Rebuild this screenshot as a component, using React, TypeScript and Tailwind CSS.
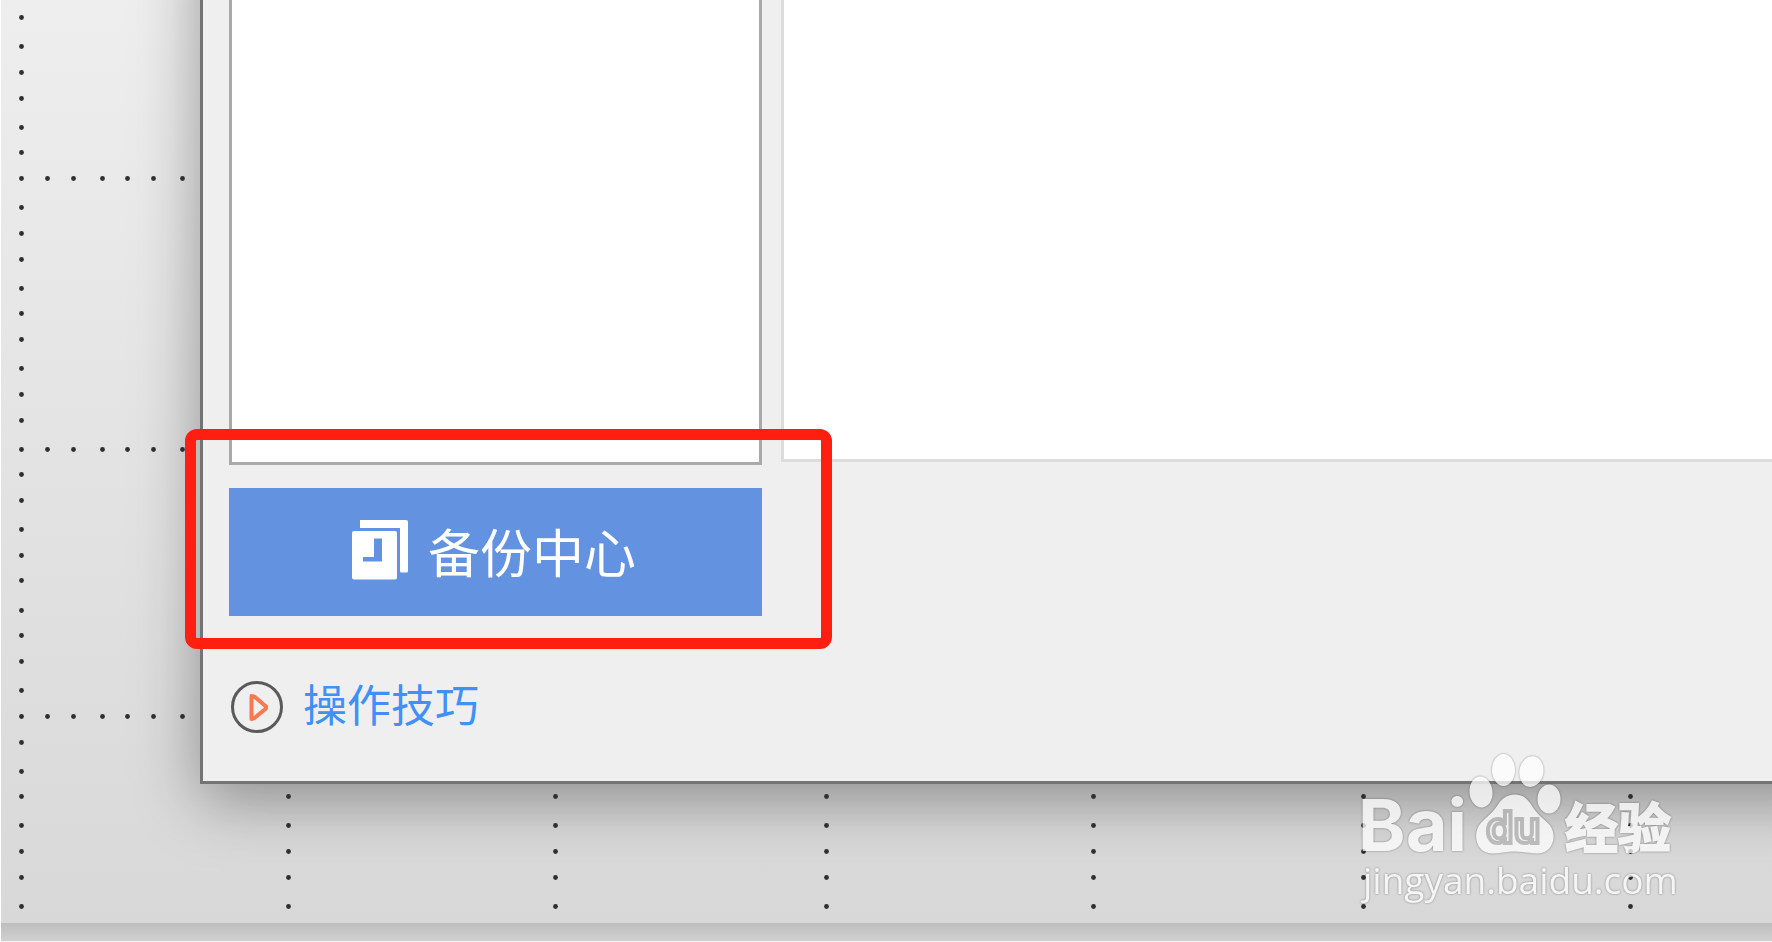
type Dot = { x: number; y: number };

const ROW_YS = [178, 449, 716];
const ROW_XS = [47, 73, 102, 127, 153, 182];
const LEFT_YS = [
  17, 46, 72, 98, 127, 152, 178, 207, 233, 259, 288, 313, 339, 368, 394, 420,
  449, 474, 500, 529, 555, 580, 610, 635, 661, 690, 716, 742, 771, 796, 825, 851,
  877, 906,
];
const COLUMN_XS = [288, 555, 826, 1093, 1363, 1630];
const COLUMN_YS = [796, 825, 851, 877, 906];

const dots: Dot[] = [
  ...LEFT_YS.map((y) => ({ x: 21, y })),
  ...ROW_YS.flatMap((y) => ROW_XS.map((x) => ({ x, y }))),
  ...COLUMN_XS.flatMap((x) => COLUMN_YS.map((y) => ({ x, y }))),
];

function CanvasGrid() {
  return (
    <svg aria-hidden="true" className="absolute inset-0 h-full w-full">
      {dots.map((dot) => (
        <circle key={`${dot.x}-${dot.y}`} cx={dot.x + 0.5} cy={dot.y + 0.5} r="2.4" fill="#2e2e2e" />
      ))}
    </svg>
  );
}

function BackupIcon() {
  return (
    <svg aria-hidden="true" viewBox="0 0 56 60" className="h-[60px] w-[56px] shrink-0">
      <path d="M8 0h46a2 2 0 0 1 2 2v49a1.500 1.500 0 0 1-1.500 1.500h-5a1.500 1.500 0 0 1-1.500-1.500V8H8z" fill="#fff" />
      <rect x="0" y="11" width="45" height="48.500" rx="2" fill="#fff" />
      <path d="M22 18.500h8v23H11v-4.500h11z" fill="#6392e0" />
    </svg>
  );
}

function PlayIcon() {
  return (
    <svg aria-hidden="true" viewBox="0 0 52 52" className="h-[52px] w-[52px] shrink-0">
      <circle cx="26" cy="26" r="24.500" fill="none" stroke="#5a5a5a" strokeWidth="3" />
      <path d="M20.500 15v23l3-1 11.500-9.500v-2L24 16z" fill="none" stroke="#f87850" strokeWidth="4" strokeLinejoin="round" />
    </svg>
  );
}

function Watermark() {
  return (
    <div className="absolute right-[76px] bottom-[12px] opacity-75 [filter:drop-shadow(0_0_1px_rgba(0,0,0,0.5))]">
      <svg viewBox="1340 750 356 180" className="h-[180px] w-[356px]" role="img" aria-label="Baidu">
        <g fill="#fff">
          <ellipse cx="1481" cy="792" rx="11.500" ry="15.500" transform="rotate(-6 1481 792)" />
          <ellipse cx="1503.500" cy="770" rx="11.500" ry="16" />
          <ellipse cx="1531.500" cy="771.500" rx="12" ry="15.500" transform="rotate(10 1531 771)" />
          <ellipse cx="1549" cy="799" rx="11.500" ry="14.500" />
          <path d="M1515 794.500c9 0 14 6 18 13 5 8 12 12 17 18 8 11 2 28-12 28-8 0-15-2-23-2s-16 2-23 2c-14 0-20-16-13-28 4-6 12-11 17-18 5-8 10-13 19-13z" />
          <text x="1358" y="851" fontSize="72" fontWeight="700" fontFamily="Inter, sans-serif">Bai</text>
          <text x="1565" y="848" fontSize="53" fontWeight="700" fontFamily="'Noto Sans CJK SC', sans-serif" stroke="#fff" strokeWidth="2">经验</text>
          <text x="1363" y="894" fontSize="37" fontWeight="500" fontFamily="'Open Sans', sans-serif">jingyan.baidu.com</text>
        </g>
        <text x="1486" y="843" fontSize="44" fontWeight="600" fontFamily="Inter, sans-serif" fill="#fff" stroke="#b4b4b4" strokeWidth="4">du</text>
      </svg>
    </div>
  );
}

function Dialog() {
  return (
    <div className="relative -mt-20 -mr-20 flex flex-1 flex-col border-[3px] border-[#747474] bg-[#efefef] pl-[26px] shadow-[0_16px_60px_rgba(0,0,0,0.36)]">
      <div className="flex flex-1 gap-[19px]">
        <aside className="w-[533px] border-[3px] border-[#a9a9a9] bg-white" />
        <section className="mb-[3px] flex-1 border-[3px] border-[#dcdcdc] bg-white" />
      </div>
      <div className="pt-[23px] pb-[48px]">
        <div className="relative w-[533px]">
          <button
            type="button"
            className="flex h-[128px] w-full items-center gap-5 bg-[#6392e0] pb-1 pl-[123px] text-[52px] leading-none text-white"
          >
            <BackupIcon />
            <span className="pt-[10px]">备份中心</span>
          </button>
          <div className="pointer-events-none absolute -top-[59px] -right-[70px] -bottom-[33px] -left-[44px] rounded-[12px] border-[11px] border-[#ff1f11]" />
        </div>
        <a href="#tips" className="mt-[65px] flex w-fit items-center gap-5 pl-[2px] text-[44px] leading-[52px] text-[#4090f7]">
          <PlayIcon />
          操作技巧
        </a>
      </div>
    </div>
  );
}

export default function App() {
  return (
    <div className="relative flex min-h-screen flex-col overflow-hidden bg-[#f0f0f0] font-['Liberation_Sans','Noto_Sans_CJK_SC',sans-serif]">
      <main className="flex flex-1 flex-col overflow-hidden bg-linear-to-b from-[#eeeeee] to-[#d8d8d8] pb-[139px] pl-[200px]">
        <Dialog />
        <CanvasGrid />
      </main>
      <div className="mb-px h-[18px] bg-linear-to-b from-[#bebebe] to-[#d0d0d0]" />
      <div className="absolute inset-y-0 left-0 w-px bg-white" />
      <Watermark />
    </div>
  );
}
